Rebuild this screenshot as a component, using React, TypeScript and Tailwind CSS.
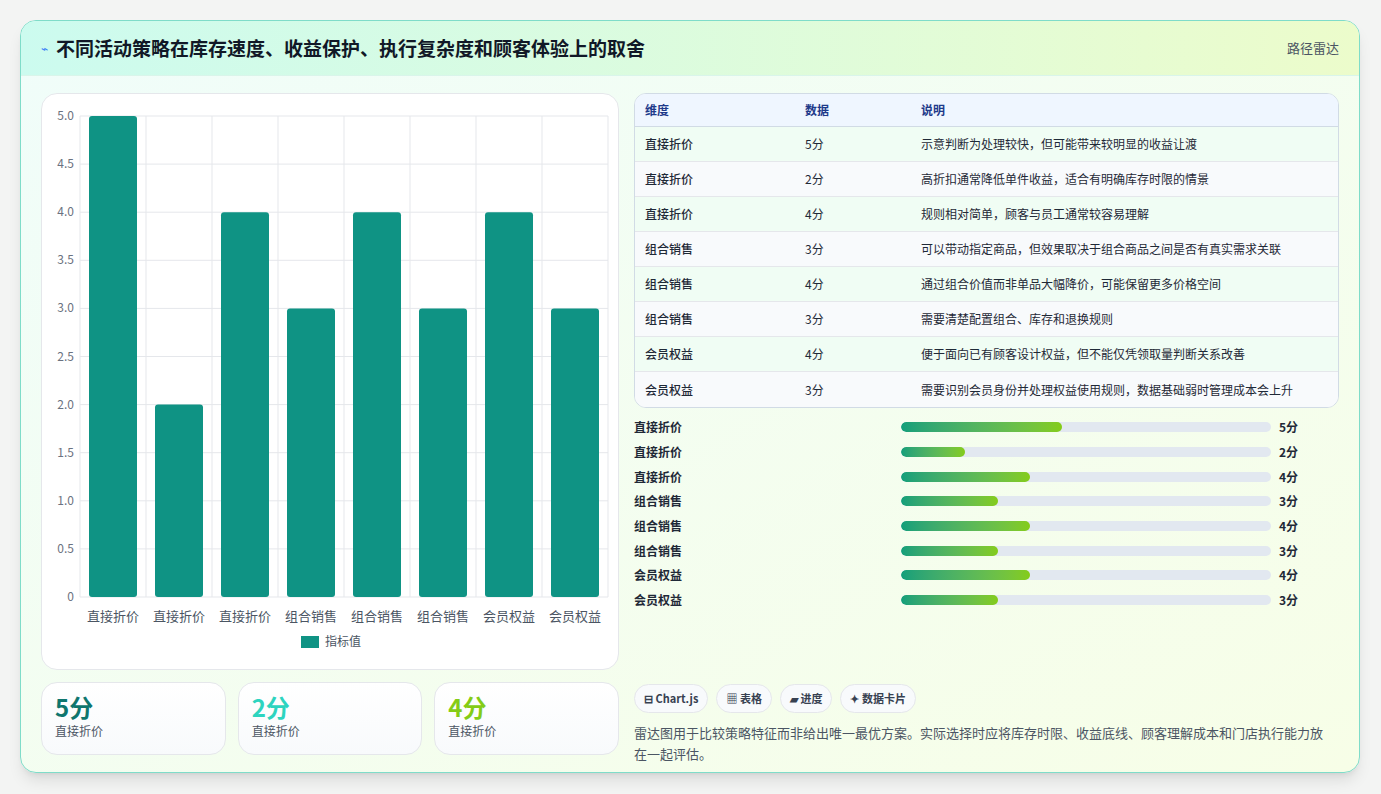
const font = { fontFamily: '"Noto Sans CJK SC", "Noto Sans", sans-serif' };

const rows = [
  ["直接折价", 5, "示意判断为处理较快，但可能带来较明显的收益让渡"],
  ["直接折价", 2, "高折扣通常降低单件收益，适合有明确库存时限的情景"],
  ["直接折价", 4, "规则相对简单，顾客与员工通常较容易理解"],
  ["组合销售", 3, "可以带动指定商品，但效果取决于组合商品之间是否有真实需求关联"],
  ["组合销售", 4, "通过组合价值而非单品大幅降价，可能保留更多价格空间"],
  ["组合销售", 3, "需要清楚配置组合、库存和退换规则"],
  ["会员权益", 4, "便于面向已有顾客设计权益，但不能仅凭领取量判断关系改善"],
  ["会员权益", 3, "需要识别会员身份并处理权益使用规则，数据基础弱时管理成本会上升"],
] as const;

function Chart() {
  const left = 38, right = 566, top = 22, bottom = 503;
  const h = bottom - top;
  const pitch = (right - left) / 8;
  const ticks = [5, 4.5, 4, 3.5, 3, 2.5, 2, 1.5, 1, 0.5, 0];
  return (
    <svg width="578" height="576" className="block">
      {ticks.map((t) => {
        const y = bottom - (t / 5) * h;
        return (
          <g key={t}>
            <line x1={left} x2={right} y1={y} y2={y} stroke="#e5e7eb" />
            <text x={left - 6} y={y + 4} textAnchor="end" fontSize="12" fill="#6b7280">
              {t === 0 ? "0" : t.toFixed(1)}
            </text>
          </g>
        );
      })}
      {Array.from({ length: 9 }).map((_, i) => (
        <line key={i} x1={left + i * pitch} x2={left + i * pitch} y1={top} y2={bottom} stroke="#e5e7eb" />
      ))}
      {rows.map((r, i) => {
        const bh = (r[1] / 5) * h;
        return (
          <g key={i}>
            <rect x={left + i * pitch + 9} y={bottom - bh} width={pitch - 18} height={bh} rx="3" fill="#0f9384" />
            <text x={left + i * pitch + pitch / 2} y={bottom + 24} textAnchor="middle" fontSize="13" fill="#4b5563">
              {r[0]}
            </text>
          </g>
        );
      })}
      <rect x="259" y="542" width="18" height="12" fill="#0f9384" />
      <text x="283" y="552" fontSize="12" fill="#4b5563">指标值</text>
    </svg>
  );
}

export default function App() {
  return (
    <div className="w-[1381px] h-[794px] bg-[#f3f4f3] pt-5 pl-5" style={font}>
      <div className="w-[1340px] h-[753px] rounded-2xl border border-[#7fdcc9] bg-gradient-to-br from-[#f0fdfa] to-[#f7fee7] shadow-lg overflow-hidden flex flex-col">
        <div className="h-[55px] flex items-center justify-between px-5 bg-gradient-to-r from-[#ccfbef] to-[#ecfccb] border-b border-[#d9f5ea]">
          <div className="flex items-center gap-2">
            <span className="text-[#3b82f6] text-xs">⌁</span>
            <span className="text-[19px] font-bold text-[#111827]">不同活动策略在库存速度、收益保护、执行复杂度和顾客体验上的取舍</span>
          </div>
          <span className="text-[13px] text-[#4b5563]">路径雷达</span>
        </div>
        <div className="flex gap-[15px] px-5 pt-[17px]">
          <div className="w-[578px] flex flex-col gap-3">
            <div className="h-[577px] bg-white rounded-2xl border border-[#e5e7eb]">
              <Chart />
            </div>
            <div className="flex gap-3">
              {[["5分", "text-[#0f766e]"], ["2分", "text-[#2dd4bf]"], ["4分", "text-[#84cc16]"]].map(([v, c], i) => (
                <div key={i} className="flex-1 h-[73px] rounded-2xl border border-[#e5e7eb] bg-gradient-to-b from-white to-[#f8fafc] px-[13px] pt-2">
                  <div className={`text-[24px] font-bold leading-8 ${c}`}>{v}</div>
                  <div className="text-xs text-[#4b5563]">直接折价</div>
                </div>
              ))}
            </div>
          </div>
          <div className="w-[708px] flex flex-col">
            <div className="rounded-xl border border-[#d1dbe5] overflow-hidden bg-white">
              <div className="flex h-[33px] items-center bg-[#eff6ff] border-b border-[#d1dbe5] text-xs font-semibold text-[#1e3a8a]">
                <div className="w-[170px] pl-[10px]">维度</div>
                <div className="w-[116px]">数据</div>
                <div>说明</div>
              </div>
              {rows.map((r, i) => (
                <div key={i} className={`flex h-[35px] items-center text-xs text-[#1f2937] border-b border-[#e5e7eb] last:border-b-0 ${i % 2 ? "bg-[#f8fafc]" : "bg-[#f0fdf4]"}`}>
                  <div className="w-[170px] pl-[10px] font-medium">{r[0]}</div>
                  <div className="w-[116px]">{r[1]}分</div>
                  <div>{r[2]}</div>
                </div>
              ))}
            </div>
            <div className="flex flex-col mt-[7px]">
              {rows.map((r, i) => (
                <div key={i} className="flex items-center h-[24.7px] text-xs font-semibold text-[#1f2937]">
                  <div className="w-[267px]">{r[0]}</div>
                  <div className="w-[370px] h-[10px] rounded-full bg-[#e2e8f0] overflow-hidden">
                    <div className="h-full rounded-full bg-gradient-to-r from-[#119f7a] to-[#84cc16]" style={{ width: `${r[1] * 8.7}%` }} />
                  </div>
                  <div className="ml-2">{r[1]}分</div>
                </div>
              ))}
            </div>
            <div className="flex gap-2 mt-[71px]">
              {["⊟ Chart.js", "▦ 表格", "▰ 进度", "✦ 数据卡片"].map((t) => (
                <span key={t} className="h-[29px] px-[9px] flex items-center rounded-full border border-[#e5e7eb] bg-[#f8fafc] text-[11px] font-semibold text-[#374151]">{t}</span>
              ))}
            </div>
            <p className="mt-[9px] text-[13px] leading-[21px] text-[#4b5563] pr-2">
              雷达图用于比较策略特征而非给出唯一最优方案。实际选择时应将库存时限、收益底线、顾客理解成本和门店执行能力放在一起评估。
            </p>
          </div>
        </div>
      </div>
    </div>
  );
}
